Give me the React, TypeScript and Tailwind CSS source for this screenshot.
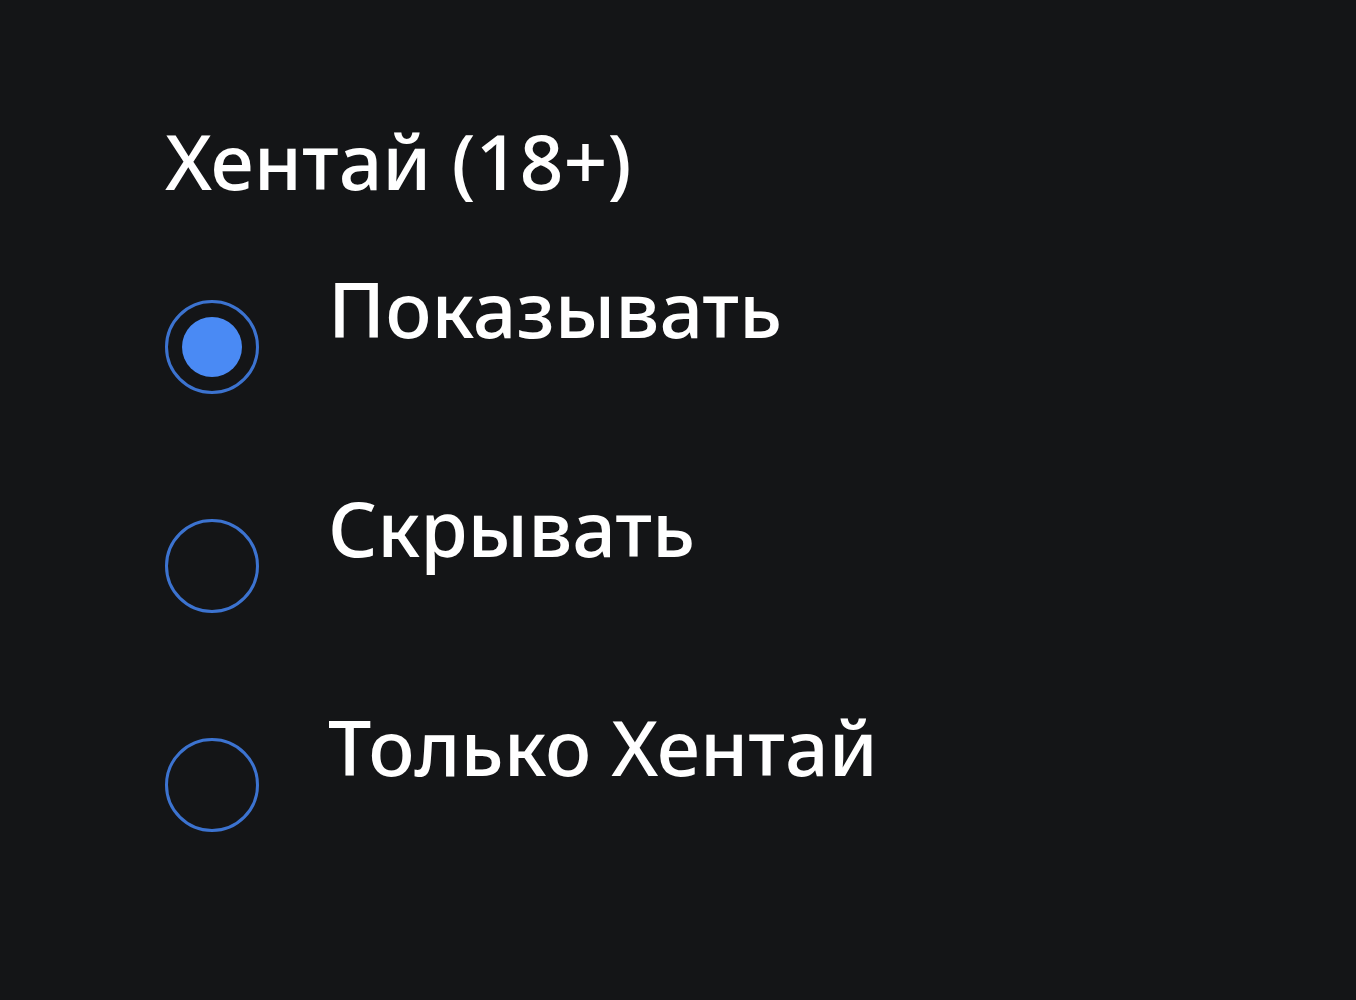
import { useState } from "react";

const options = ["Показывать", "Скрывать", "Только Хентай"];

export default function App() {
  const [selected, setSelected] = useState(0);

  return (
    <div
      className="min-h-[1000px] w-full bg-[#141517] pl-[165px] pt-[122px] text-white"
      style={{ fontFamily: '"Noto Sans", "Open Sans", sans-serif' }}
    >
      <h2 className="text-[77px] font-medium leading-none">Хентай (18+)</h2>
      <div className="mt-[71px] flex flex-col gap-[95px]">
        {options.map((label, i) => (
          <label
            key={label}
            className="flex cursor-pointer items-start gap-[69px]"
            onClick={() => setSelected(i)}
          >
            <span className="mt-[30px] flex h-[94px] w-[94px] shrink-0 items-center justify-center rounded-full border-[3px] border-[#3c73d0]">
              {selected === i && (
                <span className="h-[60px] w-[60px] rounded-full bg-[#4a8af4]" />
              )}
            </span>
            <span className="text-[77px] font-medium leading-none">{label}</span>
          </label>
        ))}
      </div>
    </div>
  );
}
